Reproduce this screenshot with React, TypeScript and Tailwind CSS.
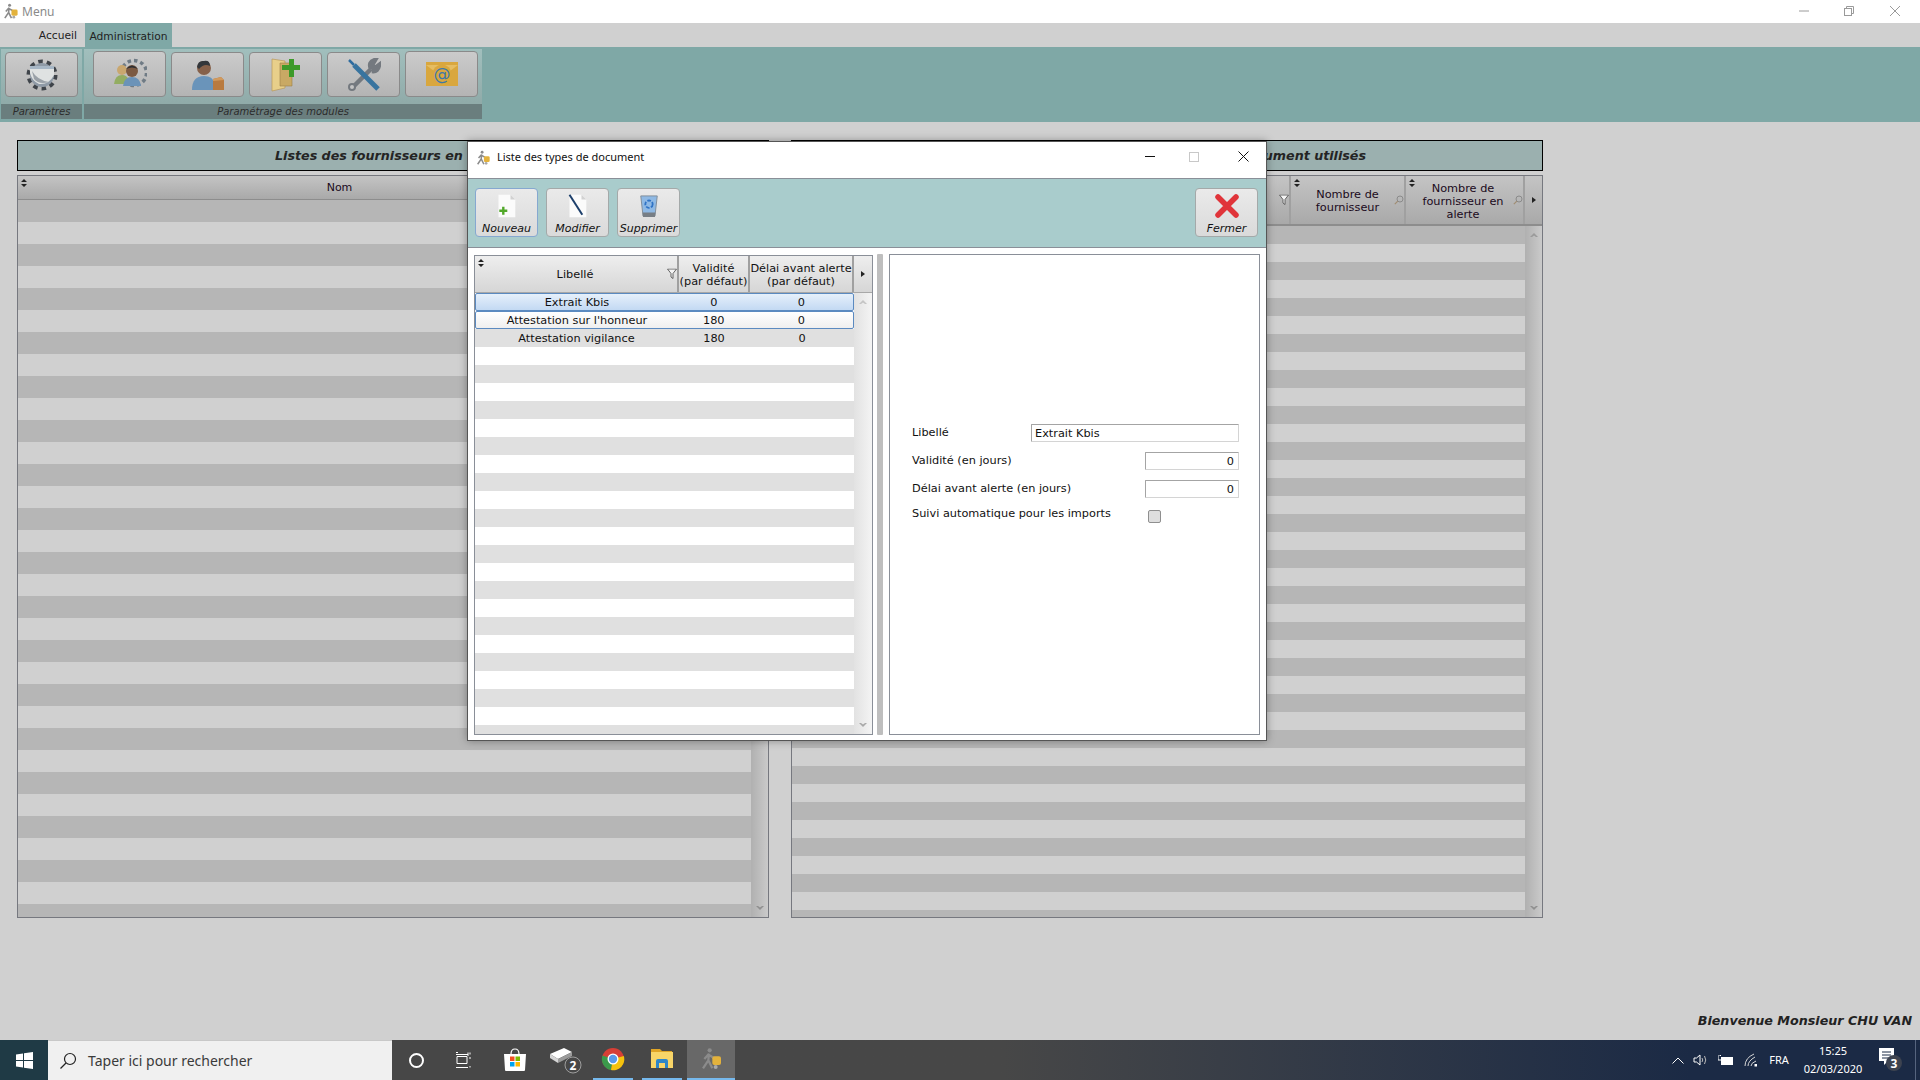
const ui = "font-['DejaVu_Sans',sans-serif]";
const seg = "font-['Noto_Sans',sans-serif]";

function AppIcon({ size = 18 }: { size?: number }) {
  return (
    <svg width={size} height={size} viewBox="0 0 18 18" className="shrink-0">
      <circle cx="8" cy="2.5" r="1.6" fill="#8b8b8b" />
      <path d="M7.5 5 L4 9 M7.5 5 L7 10 L3 16 M7 10 L10 16 M7.5 6 L11 8" stroke="#8b8b8b" strokeWidth="1.7" fill="none" />
      <rect x="10" y="7" width="6.5" height="6.5" rx="1.5" fill="#e3b23c" />
      <circle cx="12.5" cy="15" r="1.5" fill="#a9a9a9" />
    </svg>
  );
}

function SortIcon() {
  return (
    <svg width="6" height="8" viewBox="0 0 6 8" className="shrink-0">
      <path d="M3 0 L6 3 H0 Z M3 8 L0 5 H6 Z" fill="#222" />
    </svg>
  );
}

function FilterIcon() {
  return (
    <svg width="10" height="11" viewBox="0 0 10 11">
      <path d="M0.5 0.5 H9.5 L6 5 V10 L4 8.5 V5 Z" fill="#f4f4f4" stroke="#555" strokeWidth="0.9" />
    </svg>
  );
}

function LoupeIcon() {
  return (
    <svg width="10" height="10" viewBox="0 0 10 10">
      <circle cx="6" cy="4" r="3" fill="none" stroke="#8a8a8a" strokeWidth="1" />
      <path d="M3.8 6.2 L0.8 9.2" stroke="#a08d72" strokeWidth="1.2" />
    </svg>
  );
}

function Arrow({ dir, color = '#9a9a9a' }: { dir: 'up' | 'down'; color?: string }) {
  return (
    <svg width="8" height="5" viewBox="0 0 8 5">
      <path d={dir === 'up' ? 'M4 0 L8 4 L6 4 L4 2.5 L2 4 L0 4 Z' : 'M4 5 L8 1 L6 1 L4 2.5 L2 1 L0 1 Z'} fill={color} />
    </svg>
  );
}

function Gear() {
  return (
    <svg width="34" height="32" viewBox="0 0 34 32">
      <circle cx="17" cy="16" r="13.5" fill="none" stroke="#3f444a" strokeWidth="4" strokeDasharray="4.5 4" />
      <circle cx="17" cy="16" r="12" fill="#8f9aa6" />
      <path d="M5 7 H29 V16 Q24 26 14 25 Q7 22 5 14 Z" fill="#dfe2e2" />
      <path d="M5 7 H29 V10 H5 Z" fill="#a7b7c6" />
      <path d="M7 12 Q12 21 24 23 Q14 26 9 20 Z" fill="#9aa1a8" />
    </svg>
  );
}

function PeopleGear() {
  return (
    <svg width="34" height="32" viewBox="0 0 34 32">
      <circle cx="21" cy="15" r="12.5" fill="none" stroke="#6f7b85" strokeWidth="3.5" strokeDasharray="3.5 3" />
      <circle cx="9" cy="12" r="5" fill="#c9a76f" />
      <path d="M1 26 Q2 17 9 17 Q16 17 16 26 Z" fill="#93ad62" />
      <circle cx="19" cy="13" r="6" fill="#7c5a42" />
      <path d="M13 11 Q19 4 25 11 Q19 8 13 11" fill="#2d2f33" />
      <path d="M10 28 Q11 19 19 19 Q27 19 28 28 Z" fill="#6b93b8" />
    </svg>
  );
}

function UserBox() {
  return (
    <svg width="34" height="32" viewBox="0 0 34 32">
      <circle cx="13" cy="9" r="7" fill="#86614a" />
      <path d="M6 8 Q7 1 13 2 Q19 1 19 7 Q13 4 8 10 Z" fill="#33373b" />
      <path d="M1 31 Q1 17 13 17 Q22 17 23 24 V31 Z" fill="#6a94ba" />
      <path d="M22 20 L30 18 L33 21 V31 L22 31 Z" fill="#b97a3f" />
      <path d="M22 22 L33 21 L30 18 L22 20 Z" fill="#d19a5e" />
    </svg>
  );
}

function FolderPlus() {
  return (
    <svg width="30" height="34" viewBox="0 0 30 34">
      <path d="M1 1 L14 3 V30 L1 33 Z" fill="#e8cf8a" stroke="#b8985a" strokeWidth="0.7" />
      <path d="M9 5 H21 V28 H9 Z" fill="#c9a964" stroke="#9c8148" strokeWidth="0.6" />
      <path d="M18 1 H23 V7 H29 V12 H23 V19 H18 V12 H11 V7 H18 Z" fill="#3d9a2a" />
    </svg>
  );
}

function Tools() {
  return (
    <svg width="34" height="34" viewBox="0 0 34 34">
      <path d="M5 30 L24 11 M24 11 Q21 4 28 2 L25 7 L28 10 L32 7 Q31 14 25 13" stroke="#74797f" strokeWidth="4.5" fill="#74797f" />
      <circle cx="5" cy="29" r="3" fill="#c4c4c4" stroke="#74797f" strokeWidth="2" />
      <path d="M2 2 L7 7" stroke="#2f6c9f" strokeWidth="2.5" />
      <path d="M7 7 L31 31" stroke="#38749f" strokeWidth="5" />
    </svg>
  );
}

function MailAt() {
  return (
    <svg width="32" height="24" viewBox="0 0 32 24">
      <rect width="32" height="24" fill="#d9a73e" />
      <path d="M0 3 L16 15 L32 3" fill="#e6bd62" />
      <circle cx="16" cy="12" r="9.5" fill="#d9a73e" />
      <text x="16" y="18" textAnchor="middle" fontFamily="DejaVu Sans" fontSize="17" fill="#3d78a8">@</text>
    </svg>
  );
}

function DocIcon({ children }: { children: React.ReactNode }) {
  return (
    <svg width="21" height="24" viewBox="0 0 26 30">
      <path d="M3 1 H18 L24 7 V29 H3 Z" fill="#fbfbfb" />
      <path d="M18 1 L24 7 H18 Z" fill="#d2d2d2" />
      {children}
    </svg>
  );
}

function Bin() {
  return (
    <svg width="22" height="24" viewBox="0 0 24 26">
      <path d="M3 2 H21 L18.5 24 H5.5 Z" fill="#8fb9e4" stroke="#7d8a96" strokeWidth="1" />
      <path d="M5 20 H19 L18.5 25 H5.5 Z" fill="#777e85" />
      <circle cx="12" cy="11" r="4" fill="none" stroke="#2f73c5" strokeWidth="2" strokeDasharray="4 1.5" />
    </svg>
  );
}

function RedCross() {
  return (
    <svg width="24" height="24" viewBox="0 0 24 24">
      <path d="M3 3 L21 21 M21 3 L3 21" stroke="#e0343a" strokeWidth="5.5" strokeLinecap="round" />
    </svg>
  );
}

function RibbonButton({ children, raised }: { children: React.ReactNode; raised?: boolean }) {
  return (
    <div
      className={`w-[73px] flex items-center justify-center rounded-[4px] bg-gradient-to-b from-[#cbcbcb] to-[#b4b4b4] border border-[#8a8a8a] ${raised ? 'h-[46px]' : 'h-[45px] mt-[1px]'}`}
    >
      {children}
    </div>
  );
}

function RibbonGroup({ label, className, rowClass, children }: { label: string; className: string; rowClass: string; children: React.ReactNode }) {
  return (
    <div className={`flex flex-col h-[70px] bg-gradient-to-b from-[#a1bfbd] to-[#8ba5a3] ${className}`}>
      <div className={`flex flex-1 pt-[2px] gap-[5px] ${rowClass}`}>{children}</div>
      <div className={`h-[15px] bg-[#6a7e7e] text-center text-[10px] leading-[15px] italic text-[#2c2c2c] ${ui}`}>{label}</div>
    </div>
  );
}

function ToolButton({ label, icon, active }: { label: string; icon: React.ReactNode; active?: boolean }) {
  return (
    <div
      className={`w-[63px] h-[49px] rounded-[4px] flex flex-col items-center border bg-gradient-to-b from-[#eaeaea] to-[#dadada] ${active ? 'border-[#86a8d0]' : 'border-[#a4a9a9]'}`}
    >
      <div className="h-[32px] pb-[3px] flex items-end justify-center">{icon}</div>
      <div className={`text-[11px] leading-[15px] italic text-[#111] whitespace-nowrap ${ui}`}>{label}</div>
    </div>
  );
}

function PanelTitle({ className, children }: { className: string; children: React.ReactNode }) {
  return (
    <div className={`h-[31px] pt-[1px] border border-black bg-[#9bb0af] flex items-center text-[12.7px] font-bold italic text-[#242424] whitespace-nowrap ${ui} ${className}`}>
      {children}
    </div>
  );
}

function DimScrollbar() {
  return (
    <div className="w-[17px] flex flex-col items-center justify-between py-[7px] bg-gradient-to-r from-[#b0b0b0] to-[#cacaca]">
      <Arrow dir="up" color="#9a9a9a" />
      <Arrow dir="down" color="#8f8f8f" />
    </div>
  );
}

function Stripes({ count, height, even, odd }: { count: number; height: string; even: string; odd: string }) {
  return (
    <>
      {Array.from({ length: count }, (_, i) => (
        <div key={i} className={`${height} ${i % 2 === 0 ? even : odd}`} />
      ))}
    </>
  );
}

function HeaderCell({ className, children, sort = true, trailing }: { className: string; children?: React.ReactNode; sort?: boolean; trailing?: React.ReactNode }) {
  return (
    <div className={`relative flex items-center justify-center text-center border-r-2 border-[#a0a0a0] ${className}`}>
      {sort && (
        <span className="absolute left-[3px] top-[3px] flex">
          <SortIcon />
        </span>
      )}
      {children}
      {trailing && <span className="absolute right-0 top-1/2 -translate-y-1/2 flex">{trailing}</span>}
    </div>
  );
}

const documents = [
  { name: 'Extrait Kbis', validity: '0', delay: '0' },
  { name: "Attestation sur l'honneur", validity: '180', delay: '0' },
  { name: 'Attestation vigilance', validity: '180', delay: '0' },
];

function DocumentTable() {
  return (
    <div className={`w-[399px] h-[480px] border border-[#8a8f98] flex flex-col text-[11.3px] text-[#111] overflow-hidden ${ui}`}>
      <div className="h-[37px] shrink-0 flex bg-gradient-to-b from-[#eeeeee] to-[#d6d6d6] border-b border-[#a8a8a8] leading-[13px]">
        <HeaderCell className="w-[204px] pr-[2px] pt-[1px]" trailing={<FilterIcon />}>Libellé</HeaderCell>
        <HeaderCell className="w-[71px] pt-[1px]" sort={false}>Validité<br />(par défaut)</HeaderCell>
        <HeaderCell className="w-[104px] pt-[1px] whitespace-nowrap" sort={false}>Délai avant alerte<br />(par défaut)</HeaderCell>
        <div className="flex-1 flex items-center justify-center">
          <svg width="4" height="6" viewBox="0 0 4 6"><path d="M0 0 L4 3 L0 6 Z" fill="#222" /></svg>
        </div>
      </div>
      <div className="flex flex-1 min-h-0">
        <div className="w-[379px] overflow-hidden">
          {documents.map((doc, i) => (
            <div
              key={doc.name}
              className={`h-[18px] pt-[1px] flex items-center leading-[16px] ${
                i === 0
                  ? 'bg-gradient-to-b from-[#e6f0fb] to-[#c3d9f3] border border-[#5b8ac0] rounded-[2px]'
                  : i === 1
                    ? 'bg-gradient-to-b from-[#ffffff] to-[#efefef] border border-[#5b8ac0] rounded-[2px]'
                    : 'bg-[#e0e0e0]'
              }`}
            >
              <div className="w-[203px] text-center">{doc.name}</div>
              <div className="w-[72px] text-center">{doc.validity}</div>
              <div className="w-[104px] text-center">{doc.delay}</div>
            </div>
          ))}
          <Stripes count={24} height="h-[18px]" even="bg-white" odd="bg-[#e0e0e0]" />
        </div>
        <div className="flex-1 flex flex-col items-center justify-between py-[7px] bg-gradient-to-r from-[#e2e2e2] to-[#f4f4f4]">
          <Arrow dir="up" color="#c4c4c4" />
          <Arrow dir="down" color="#a8a8a8" />
        </div>
      </div>
    </div>
  );
}

function DocumentForm() {
  const input = 'h-[18px] border border-[#a4a4a4] border-b-[#d4d4d4] border-r-[#d4d4d4] rounded-[1px] bg-white leading-[17px] text-[#111]';
  return (
    <div className={`w-[371px] h-[481px] -mt-[1px] border border-[#8a8f98] bg-white pt-[169px] pl-[22px] pr-[20px] flex flex-col text-[11.3px] text-[#111] ${ui}`}>
      <div className="flex items-center justify-between h-[18px]">
        <span>Libellé</span>
        <div className={`${input} w-[208px] px-[3px]`}>Extrait Kbis</div>
      </div>
      <div className="flex items-center justify-between h-[18px] mt-[10px]">
        <span className="mt-[1px]">Validité (en jours)</span>
        <div className={`${input} w-[94px] px-[4px] text-right`}>0</div>
      </div>
      <div className="flex items-center justify-between h-[18px] mt-[10px]">
        <span>Délai avant alerte (en jours)</span>
        <div className={`${input} w-[94px] px-[4px] text-right`}>0</div>
      </div>
      <div className="flex items-start h-[18px] mt-[8px]">
        <span className="w-[236px] mt-[1px] leading-[14px]">Suivi automatique pour les imports</span>
        <div className="w-[13px] h-[13px] mt-[4px] rounded-[2px] border border-[#8f8f8f] bg-[#dedede]" />
      </div>
    </div>
  );
}

function DocumentDialog() {
  return (
    <div className="absolute left-[467px] top-[141px] w-[800px] h-[600px] flex flex-col bg-white border border-[#555] shadow-[0_0_8px_rgba(0,0,0,0.35)]">
      <div className="h-[36px] shrink-0 flex items-center pl-[7px] pb-[5px]">
        <AppIcon size={16} />
        <span className={`ml-[6px] text-[11px] text-[#111] ${seg}`}>Liste des types de document</span>
        <div className="ml-auto flex items-center pb-[2px]">
          <svg width="11" height="11" viewBox="0 0 11 11" className="mr-[33px]"><path d="M0 5.5 H10" stroke="#111" strokeWidth="1" /></svg>
          <svg width="10" height="10" viewBox="0 0 10 10" className="mr-[39px]"><rect x="0.5" y="0.5" width="9" height="9" fill="none" stroke="#c8c8c8" /></svg>
          <svg width="11" height="11" viewBox="0 0 11 11" className="mr-[17px]"><path d="M0.5 0.5 L10.5 10.5 M10.5 0.5 L0.5 10.5" stroke="#111" strokeWidth="1" /></svg>
        </div>
      </div>
      <div className="h-[70px] shrink-0 flex items-start gap-[8px] pl-[7px] pr-[8px] pt-[9px] bg-[#a9cccc] border-y border-[#8a8f98]">
        <ToolButton
          active
          label="Nouveau"
          icon={
            <DocIcon>
              <path d="M4 21 H14 M9 16 V26" stroke="#52a82a" strokeWidth="3" />
            </DocIcon>
          }
        />
        <ToolButton
          label="Modifier"
          icon={
            <DocIcon>
              <path d="M3 1 L19 26" stroke="#1d3f6b" strokeWidth="2.5" />
            </DocIcon>
          }
        />
        <ToolButton label="Supprimer" icon={<Bin />} />
        <div className="ml-auto">
          <ToolButton label="Fermer" icon={<RedCross />} />
        </div>
      </div>
      <div className="flex flex-1 min-h-0 pl-[6px] pt-[7px]">
        <DocumentTable />
        <div className="w-[6px] h-[481px] ml-[4px] mr-[6px] -mt-[1px] bg-[#bebebe] rounded-[1px]" />
        <DocumentForm />
      </div>
    </div>
  );
}

function Taskbar() {
  return (
    <div className={`h-[40px] shrink-0 flex text-white ${seg}`}>
      <div className="w-[48px] bg-[#1f3a45] flex items-center justify-center">
        <svg width="17" height="17" viewBox="0 0 17 17" fill="#fff">
          <path d="M0 2.4 L7 1.4 V8 H0 Z M8 1.3 L17 0 V8 H8 Z M0 9 H7 V15.6 L0 14.6 Z M8 9 H17 V17 L8 15.7 Z" />
        </svg>
      </div>
      <div className="w-[344px] bg-[#f0f0f0] border-t border-[#c8c8c8] flex items-center pl-[11px] text-[#3a3a3a] text-[14px]">
        <svg width="18" height="18" viewBox="0 0 18 18" fill="none" stroke="#222" strokeWidth="1.2">
          <circle cx="11" cy="7" r="5.5" />
          <path d="M7 11 L1.5 16.5" />
        </svg>
        <span className="ml-[11px]">Taper ici pour rechercher</span>
      </div>
      <div className="flex-1 flex items-stretch bg-gradient-to-r from-[#474747] from-40% to-[#1b2a45] to-85%">
        <div className="w-[48px] flex items-center justify-center">
          <div className="w-[15px] h-[15px] rounded-full border-2 border-white" />
        </div>
        <div className="w-[48px] flex items-center justify-center">
          <svg width="16" height="16" viewBox="0 0 16 16" fill="none" stroke="#fff" strokeWidth="1">
            <path d="M0 .5 H2 M0 15.5 H12 M1 4.5 H11 V11.5 H1 Z M0 2.5 H12 M14 5 V7 M14 .5 V2.5 M14 14 V15.5 M12 .5 V4" />
          </svg>
        </div>
        <div className="w-[51px] pl-[3px] flex items-center justify-center">
          <svg width="24" height="24" viewBox="0 0 24 24">
            <path d="M8 6 Q8 1 12 1 Q16 1 16 6" fill="none" stroke="#fff" strokeWidth="1.2" />
            <path d="M1 6 H23 L22 22 Q22 23 21 23 H3 Q2 23 2 22 Z" fill="#fff" />
            <rect x="7" y="8.5" width="4.5" height="4.5" fill="#f25022" />
            <rect x="12.5" y="8.5" width="4.5" height="4.5" fill="#7fba00" />
            <rect x="7" y="14" width="4.5" height="4.5" fill="#00a4ef" />
            <rect x="12.5" y="14" width="4.5" height="4.5" fill="#ffb900" />
          </svg>
        </div>
        <div className="w-[54px] relative flex items-center justify-center">
          <svg width="32" height="28" viewBox="0 0 32 28">
            <path d="M0 8 L14 2 L22 6 L8 13 Z" fill="#fff" />
            <path d="M0 8 V12 L8 17 V13 Z" fill="#d5d5d5" />
            <path d="M8 13 L22 6 V10 L8 17 Z" fill="#9b9b9b" />
            <circle cx="23" cy="19" r="8" fill="#474747" stroke="#b4b4b4" strokeWidth="0.8" />
            <text x="23" y="23.5" textAnchor="middle" fontSize="12" fontWeight="700" fill="#fff" fontFamily="Noto Sans">2</text>
          </svg>
        </div>
        <div className="w-[40px] border-b-2 border-[#76b9ed] flex items-center justify-center">
          <svg width="24" height="24" viewBox="0 0 24 24">
            <circle cx="12" cy="12" r="11" fill="#d63f36" />
            <path d="M12 12 L1.5 8.5 A11 11 0 0 0 10 23 Z" fill="#3b9a4b" />
            <path d="M12 12 L22.8 9 A11 11 0 0 1 10 23 Z" fill="#f4c20d" />
            <circle cx="12" cy="12" r="5.5" fill="#fff" />
            <circle cx="12" cy="12" r="4.2" fill="#5a9ae8" />
          </svg>
        </div>
        <div className="w-[9px]" />
        <div className="w-[40px] border-b-2 border-[#76b9ed] flex items-center justify-center">
          <svg width="22" height="20" viewBox="0 0 22 20">
            <path d="M0 0 H9 L11 2 H21 V5 H0 Z" fill="#e0a526" />
            <path d="M0 3 H22 V19 H0 Z" fill="#f8d568" />
            <path d="M5 19 V12 Q5 10 7 10 H15 Q17 10 17 12 V19 H14 V14 H8 V19 Z" fill="#2e86c8" />
          </svg>
        </div>
        <div className="w-[5px]" />
        <div className="w-[48px] bg-[#686868] border-b-2 border-[#76b9ed] flex items-center justify-center">
          <AppIcon size={24} />
        </div>
        <div className="flex-1" />
        <div className="w-[20px] flex items-center justify-center">
          <svg width="12" height="7" viewBox="0 0 12 7" fill="none" stroke="#fff" strokeWidth="1"><path d="M0.5 6.5 L6 1 L11.5 6.5" /></svg>
        </div>
        <div className="w-[26px] flex items-center justify-center">
          <svg width="16" height="14" viewBox="0 0 16 14" fill="none" stroke="#fff" strokeWidth="1">
            <path d="M1 5 H3.5 L7 2 V12 L3.5 9 H1 Z" />
            <path d="M9 5 Q10.5 7 9 9 M11.5 3 Q14 7 11.5 11" stroke="#bbb" />
          </svg>
        </div>
        <div className="w-[24px] flex items-center justify-center">
          <svg width="16" height="11" viewBox="0 0 16 11">
            <rect x="3" y="2" width="12" height="8" fill="#fff" />
            <path d="M0 1 V5 H3 M1 0 V1 M2.5 0 V1" stroke="#fff" fill="none" />
          </svg>
        </div>
        <div className="w-[26px] flex items-center justify-center">
          <svg width="14" height="14" viewBox="0 0 14 14" fill="none" stroke="#d6d6d6" strokeWidth="1">
            <path d="M1 13 Q1 5 10 1 M4 13 Q4 8 11 4 M7 13 Q7 10 12 8" />
            <rect x="10.5" y="11" width="2.5" height="2.5" fill="#fff" stroke="none" />
          </svg>
        </div>
        <div className="w-[30px] flex items-center justify-center text-[11px]">FRA</div>
        <div className="w-[70px] ml-[4px] flex flex-col items-center justify-center text-[11px] leading-[18px]">
          <span>15:25</span>
          <span>02/03/2020</span>
        </div>
        <div className="w-[48px] relative flex items-center justify-center border-r border-[#56647e]">
          <svg width="28" height="26" viewBox="0 0 28 26">
            <path d="M1 1 H16 V14 H10 L6 18 V14 H1 Z" fill="#fff" />
            <path d="M4 5 H13 M4 8 H13 M4 11 H10" stroke="#1b2a45" strokeWidth="1" />
            <circle cx="16" cy="16" r="8" fill="#3d4350" />
            <text x="16" y="20.5" textAnchor="middle" fontSize="12" fontWeight="700" fill="#fff" fontFamily="Noto Sans">3</text>
          </svg>
        </div>
        <div className="w-[4px]" />
      </div>
    </div>
  );
}

export default function App() {
  return (
    <div className="relative w-[1920px] h-[1080px] overflow-hidden flex flex-col bg-[#d0d0d0]">
      {/* Window title */}
      <div className="h-[23px] shrink-0 bg-white flex items-center pl-[2px]">
        <AppIcon size={17} />
        <span className={`ml-[3px] text-[12px] text-[#8a8a8a] ${seg}`}>Menu</span>
        <div className="ml-auto flex items-center pr-[20px] pb-[2px]">
          <svg width="10" height="10" viewBox="0 0 10 10" className="mr-[35px]"><path d="M0 5 H10" stroke="#9a9a9a" /></svg>
          <svg width="10" height="10" viewBox="0 0 10 10" className="mr-[36px]" fill="none" stroke="#9a9a9a"><path d="M2.5 2.5 V.5 H9.5 V7.5 H7.5" /><rect x=".5" y="2.5" width="7" height="7" /></svg>
          <svg width="10" height="10" viewBox="0 0 10 10"><path d="M0 0 L10 10 M10 0 L0 10" stroke="#9a9a9a" /></svg>
        </div>
      </div>

      {/* Tabs */}
      <div className={`h-[24px] shrink-0 flex text-[10.7px] text-[#222] ${ui}`}>
        <div className="w-[85px] bg-[#d0d0d0] text-right pr-[8px] pt-[6px] leading-[14px]">Accueil</div>
        <div className="w-[87px] bg-[#7fa8a6] text-center pt-[7px] leading-[14px]">Administration</div>
      </div>

      {/* Ribbon */}
      <div className="h-[75px] shrink-0 bg-[#7fa8a6] flex gap-[2px] pl-[1px] pt-[2px]">
        <RibbonGroup label="Paramètres" className="w-[81px]" rowClass="justify-center">
          <RibbonButton><Gear /></RibbonButton>
        </RibbonGroup>
        <RibbonGroup label="Paramétrage des modules" className="w-[398px]" rowClass="pl-[9px]">
          <RibbonButton raised><PeopleGear /></RibbonButton>
          <RibbonButton><UserBox /></RibbonButton>
          <RibbonButton><FolderPlus /></RibbonButton>
          <RibbonButton><Tools /></RibbonButton>
          <RibbonButton raised><MailAt /></RibbonButton>
        </RibbonGroup>
      </div>

      {/* Main area */}
      <div className="flex-1 min-h-0 flex flex-col px-[17px] pt-[18px]">
        <div className="flex gap-[22px]">
          <div className="w-[752px] flex flex-col gap-[4px]">
            <PanelTitle className="pl-[257px]">Listes des fournisseurs en</PanelTitle>
            <div className={`h-[743px] border border-[#76787f] flex flex-col overflow-hidden text-[11px] text-[#1a0a20] ${ui}`}>
              <div className="h-[24px] shrink-0 flex bg-gradient-to-b from-[#c4c4c4] to-[#a9a9a9] border-b border-[#8d8d8d]">
                <HeaderCell className="w-[645px] pt-[2px]">Nom</HeaderCell>
                <div className="flex-1" />
              </div>
              <div className="flex flex-1 min-h-0">
                <div className="flex-1 overflow-hidden">
                  <Stripes count={33} height="h-[22px]" even="bg-[#b6b6b6]" odd="bg-[#d0d0d0]" />
                </div>
                <DimScrollbar />
              </div>
            </div>
          </div>
          <div className="w-[752px] flex flex-col gap-[4px]">
            <PanelTitle className="justify-end pr-[176px]">Listes des types de document utilisés</PanelTitle>
            <div className={`h-[743px] border border-[#76787f] flex flex-col overflow-hidden text-[11.3px] text-[#1a0a20] ${ui}`}>
              <div className="h-[50px] shrink-0 flex bg-gradient-to-b from-[#c4c4c4] to-[#a9a9a9] border-b-2 border-[#8d8d8d] leading-[13px]">
                <HeaderCell className="w-[499px]" trailing={<FilterIcon />} />
                <HeaderCell className="w-[115px] pt-[2px]" trailing={<LoupeIcon />}>Nombre de<br />fournisseur</HeaderCell>
                <HeaderCell className="w-[119px] pr-[3px] pt-[2px]" trailing={<LoupeIcon />}>Nombre de<br />fournisseur en<br />alerte</HeaderCell>
                <div className="flex-1 flex items-center justify-center">
                  <svg width="4" height="6" viewBox="0 0 4 6"><path d="M0 0 L4 3 L0 6 Z" fill="#222" /></svg>
                </div>
              </div>
              <div className="flex flex-1 min-h-0">
                <div className="flex-1 overflow-hidden">
                  <Stripes count={39} height="h-[18px]" even="bg-[#b6b6b6]" odd="bg-[#d0d0d0]" />
                </div>
                <DimScrollbar />
              </div>
            </div>
          </div>
        </div>
        <div className={`mt-[95px] -mr-[9px] text-right text-[12.7px] font-bold italic text-[#222] leading-[16px] ${ui}`}>
          Bienvenue Monsieur CHU VAN
        </div>
      </div>

      <Taskbar />
      <DocumentDialog />
    </div>
  );
}
